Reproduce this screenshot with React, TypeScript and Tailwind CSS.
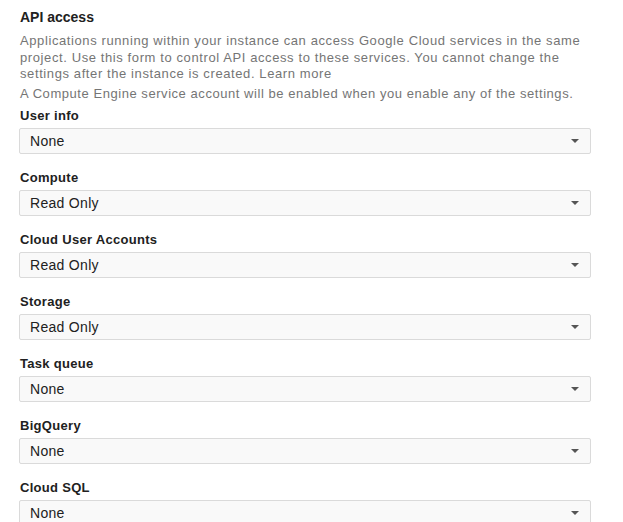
import React from "react";

const fields: [string, string][] = [
  ["User info", "None"],
  ["Compute", "Read Only"],
  ["Cloud User Accounts", "Read Only"],
  ["Storage", "Read Only"],
  ["Task queue", "None"],
  ["BigQuery", "None"],
  ["Cloud SQL", "None"],
];

export default function App() {
  return (
    <div className="h-[522px] w-[623px] overflow-hidden bg-white pl-[20px] pr-[30px] pt-[7px] font-['Liberation_Sans',Arial,sans-serif]">
      <h2 className="text-[14px] font-bold leading-[20px] text-[#212121]">
        API access
      </h2>
      <p className="mt-[6px] text-[13px] leading-[16.5px] tracking-[0.6px] text-[#757575]">
        Applications running within your instance can access Google Cloud services in the same project. Use this form to control API access to these services. You cannot change the settings after the instance is created. Learn more
      </p>
      <p className="mt-[3px] text-[13px] leading-[16.5px] tracking-[0.55px] text-[#757575]">
        A Compute Engine service account will be enabled when you enable any of the settings.
      </p>
      <div className="mt-[6px] flex flex-col">
        {fields.map(([label, value]) => (
          <div key={label} className="mb-[16px] flex flex-col">
            <div className="text-[13px] font-bold leading-[16px] tracking-[0.3px] text-[#212121]">
              {label}
            </div>
            <div className="ml-[-1px] mt-[4px] flex h-[26px] w-[572px] items-center justify-between rounded-[2px] border border-[#dadada] bg-[#f9f9f9] pl-[10px] pr-[11px]">
              <span className="text-[14px] tracking-[0.3px] text-[#212121]">{value}</span>
              <svg width="8" height="4" viewBox="0 0 8 4">
                <path d="M0 0 L8 0 L4 4 Z" fill="#555" />
              </svg>
            </div>
          </div>
        ))}
      </div>
    </div>
  );
}
